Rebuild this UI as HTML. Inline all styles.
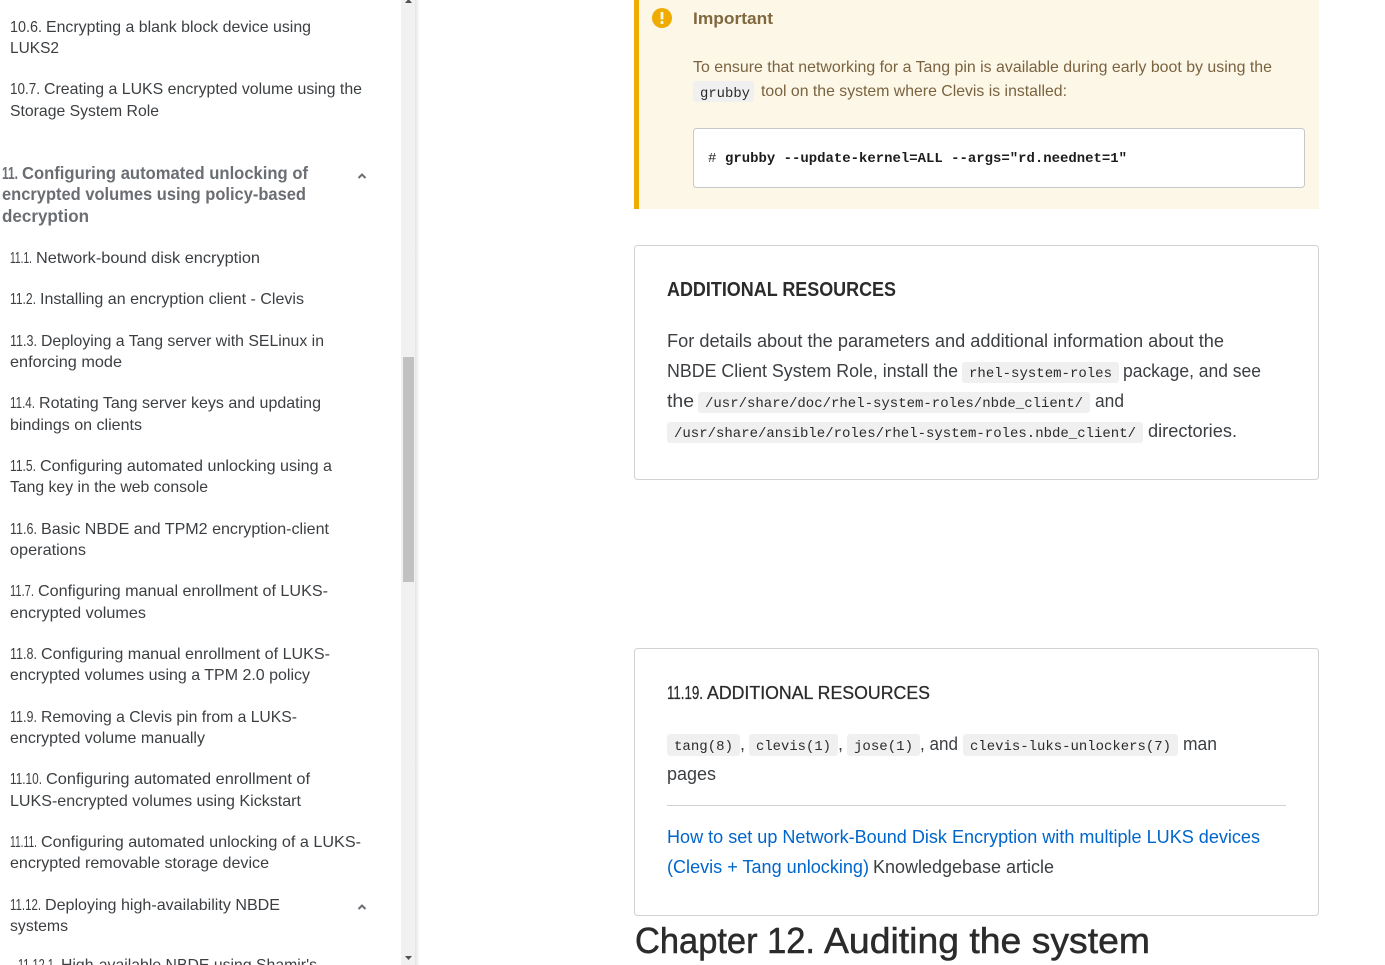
<!DOCTYPE html>
<html lang="en"><head><meta charset="utf-8"><title>Chapter 12. Auditing the system</title>
<style>
html,body{margin:0;padding:0;background:#fff;width:1385px;height:965px;overflow:hidden}
svg{position:absolute;left:0;top:0;display:block}
text{font-family:"Liberation Sans",sans-serif;white-space:pre}
.s{font-size:16px;fill:#3c3f42}
.h{font-size:17.5px;font-weight:bold;fill:#6a6e73}
.p{font-size:18px;fill:#3c3f42}
.c{font-family:"Liberation Mono",monospace;font-size:14px;fill:#2b2b2b}
.w{font-size:16px;fill:#7a6340}
.b{fill:#f0f0f0}
.l{font-size:18px;fill:#0066cc}
</style></head><body>
<svg width="1385" height="965" viewBox="0 0 1385 965" xmlns="http://www.w3.org/2000/svg">
<defs><linearGradient id="sh" x1="0" x2="1" y1="0" y2="0"><stop offset="0" stop-color="#e4e4e4"/><stop offset="1" stop-color="#fff"/></linearGradient></defs>

<!-- sidebar -->
<text class="s" x="10" y="32" textLength="32" lengthAdjust="spacingAndGlyphs">10.6.</text>
<text class="s" x="46" y="32" textLength="265" lengthAdjust="spacingAndGlyphs">Encrypting a blank block device using</text>
<text class="s" x="10" y="53" textLength="49" lengthAdjust="spacingAndGlyphs">LUKS2</text>
<text class="s" x="10" y="94" textLength="30" lengthAdjust="spacingAndGlyphs">10.7.</text>
<text class="s" x="44" y="94" textLength="318" lengthAdjust="spacingAndGlyphs">Creating a LUKS encrypted volume using the</text>
<text class="s" x="10" y="116" textLength="149" lengthAdjust="spacingAndGlyphs">Storage System Role</text>
<text class="h" x="2" y="179" textLength="16" lengthAdjust="spacingAndGlyphs">11.</text>
<text class="h" x="22" y="179" textLength="286" lengthAdjust="spacingAndGlyphs">Configuring automated unlocking of</text>
<text class="h" x="2" y="200" textLength="304" lengthAdjust="spacingAndGlyphs">encrypted volumes using policy-based</text>
<text class="h" x="2" y="222" textLength="87" lengthAdjust="spacingAndGlyphs">decryption</text>
<text class="s" x="10" y="263" textLength="22" lengthAdjust="spacingAndGlyphs">11.1.</text>
<text class="s" x="36" y="263" textLength="224" lengthAdjust="spacingAndGlyphs">Network-bound disk encryption</text>
<text class="s" x="10" y="304" textLength="26" lengthAdjust="spacingAndGlyphs">11.2.</text>
<text class="s" x="40" y="304" textLength="264" lengthAdjust="spacingAndGlyphs">Installing an encryption client - Clevis</text>
<text class="s" x="10" y="346" textLength="27" lengthAdjust="spacingAndGlyphs">11.3.</text>
<text class="s" x="41" y="346" textLength="283" lengthAdjust="spacingAndGlyphs">Deploying a Tang server with SELinux in</text>
<text class="s" x="10" y="367" textLength="112" lengthAdjust="spacingAndGlyphs">enforcing mode</text>
<text class="s" x="10" y="408" textLength="25" lengthAdjust="spacingAndGlyphs">11.4.</text>
<text class="s" x="39" y="408" textLength="282" lengthAdjust="spacingAndGlyphs">Rotating Tang server keys and updating</text>
<text class="s" x="10" y="430" textLength="132" lengthAdjust="spacingAndGlyphs">bindings on clients</text>
<text class="s" x="10" y="471" textLength="26" lengthAdjust="spacingAndGlyphs">11.5.</text>
<text class="s" x="40" y="471" textLength="292" lengthAdjust="spacingAndGlyphs">Configuring automated unlocking using a</text>
<text class="s" x="10" y="492" textLength="198" lengthAdjust="spacingAndGlyphs">Tang key in the web console</text>
<text class="s" x="10" y="534" textLength="27" lengthAdjust="spacingAndGlyphs">11.6.</text>
<text class="s" x="41" y="534" textLength="288" lengthAdjust="spacingAndGlyphs">Basic NBDE and TPM2 encryption-client</text>
<text class="s" x="10" y="555" textLength="76" lengthAdjust="spacingAndGlyphs">operations</text>
<text class="s" x="10" y="596" textLength="24" lengthAdjust="spacingAndGlyphs">11.7.</text>
<text class="s" x="38" y="596" textLength="290" lengthAdjust="spacingAndGlyphs">Configuring manual enrollment of LUKS-</text>
<text class="s" x="10" y="618" textLength="136" lengthAdjust="spacingAndGlyphs">encrypted volumes</text>
<text class="s" x="10" y="659" textLength="27" lengthAdjust="spacingAndGlyphs">11.8.</text>
<text class="s" x="41" y="659" textLength="289" lengthAdjust="spacingAndGlyphs">Configuring manual enrollment of LUKS-</text>
<text class="s" x="10" y="680" textLength="300" lengthAdjust="spacingAndGlyphs">encrypted volumes using a TPM 2.0 policy</text>
<text class="s" x="10" y="722" textLength="27" lengthAdjust="spacingAndGlyphs">11.9.</text>
<text class="s" x="41" y="722" textLength="256" lengthAdjust="spacingAndGlyphs">Removing a Clevis pin from a LUKS-</text>
<text class="s" x="10" y="743" textLength="195" lengthAdjust="spacingAndGlyphs">encrypted volume manually</text>
<text class="s" x="10" y="784" textLength="32" lengthAdjust="spacingAndGlyphs">11.10.</text>
<text class="s" x="46" y="784" textLength="264" lengthAdjust="spacingAndGlyphs">Configuring automated enrollment of</text>
<text class="s" x="10" y="806" textLength="291" lengthAdjust="spacingAndGlyphs">LUKS-encrypted volumes using Kickstart</text>
<text class="s" x="10" y="847" textLength="27" lengthAdjust="spacingAndGlyphs">11.11.</text>
<text class="s" x="41" y="847" textLength="320" lengthAdjust="spacingAndGlyphs">Configuring automated unlocking of a LUKS-</text>
<text class="s" x="10" y="868" textLength="259" lengthAdjust="spacingAndGlyphs">encrypted removable storage device</text>
<text class="s" x="10" y="910" textLength="31" lengthAdjust="spacingAndGlyphs">11.12.</text>
<text class="s" x="45" y="910" textLength="235" lengthAdjust="spacingAndGlyphs">Deploying high-availability NBDE</text>
<text class="s" x="10" y="931" textLength="58" lengthAdjust="spacingAndGlyphs">systems</text>
<text class="s" x="18" y="970" textLength="39" lengthAdjust="spacingAndGlyphs">11.12.1.</text>
<text class="s" x="61" y="970" textLength="256" lengthAdjust="spacingAndGlyphs">High-available NBDE using Shamir's</text>
<path d="M358.500 178 L362 174.500 L365.500 178" fill="none" stroke="#6a6e73" stroke-width="2"/>
<path d="M358.500 909 L362 905.500 L365.500 909" fill="none" stroke="#6a6e73" stroke-width="2"/>

<!-- scrollbar -->
<rect x="401" y="0" width="14" height="965" fill="#f1f1f1"/>
<rect x="415" y="0" width="5" height="965" fill="url(#sh)"/>
<rect x="403" y="357" width="11" height="225" fill="#c1c1c1"/>
<path d="M405 3 L412 3 L408.500 -1 Z" fill="#505050"/>
<path d="M405 956 L412 956 L408.500 960 Z" fill="#505050"/>

<!-- callout -->
<rect x="634" y="0" width="685" height="209" fill="#fdf7e7"/>
<rect x="634" y="0" width="5" height="209" fill="#f0ab00"/>
<circle cx="662" cy="18" r="10" fill="#f0ab00"/>
<rect x="660.600" y="12" width="2.800" height="7.500" rx=".5" fill="#fdf7e7"/>
<rect x="660.600" y="21" width="2.800" height="3" rx=".5" fill="#fdf7e7"/>
<text x="693" y="24" font-size="17" font-weight="bold" fill="#80683f" textLength="80" lengthAdjust="spacingAndGlyphs">Important</text>
<text class="w" x="693" y="72" textLength="579" lengthAdjust="spacingAndGlyphs">To ensure that networking for a Tang pin is available during early boot by using the</text>
<rect class="b" x="693" y="81" width="61" height="21" rx="3"/>
<text class="c" x="700" y="97" textLength="50" lengthAdjust="spacingAndGlyphs">grubby</text>
<text class="w" x="761" y="96" textLength="306" lengthAdjust="spacingAndGlyphs">tool on the system where Clevis is installed:</text>
<rect x="693.500" y="128.500" width="611" height="59" rx="3" fill="#fff" stroke="#c8c8c8"/>
<text class="c" x="708" y="162">#</text>
<text class="c" x="725" y="162" font-weight="bold" textLength="402" lengthAdjust="spacingAndGlyphs" style="fill:#1c1c1c">grubby --update-kernel=ALL --args="rd.neednet=1"</text>

<!-- additional resources 1 -->
<rect x="634.500" y="245.500" width="684" height="234" rx="3" fill="#fff" stroke="#d2d2d2"/>
<text x="667" y="296" font-size="20" font-weight="bold" fill="#2b2b2b" textLength="229" lengthAdjust="spacingAndGlyphs">ADDITIONAL RESOURCES</text>
<text class="p" x="667" y="347" textLength="557" lengthAdjust="spacingAndGlyphs">For details about the parameters and additional information about the</text>
<text class="p" x="667" y="377" textLength="291" lengthAdjust="spacingAndGlyphs">NBDE Client System Role, install the</text>
<rect class="b" x="962" y="362" width="157" height="21" rx="3"/>
<text class="c" x="969" y="377" textLength="143" lengthAdjust="spacingAndGlyphs">rhel-system-roles</text>
<text class="p" x="1123" y="377" textLength="138" lengthAdjust="spacingAndGlyphs">package, and see</text>
<text class="p" x="667" y="407" textLength="27" lengthAdjust="spacingAndGlyphs">the</text>
<rect class="b" x="698" y="392" width="392" height="21" rx="3"/>
<text class="c" x="705" y="407" textLength="378" lengthAdjust="spacingAndGlyphs">/usr/share/doc/rhel-system-roles/nbde_client/</text>
<text class="p" x="1095" y="407" textLength="29" lengthAdjust="spacingAndGlyphs">and</text>
<rect class="b" x="667" y="422" width="476" height="21" rx="3"/>
<text class="c" x="674" y="437" textLength="462" lengthAdjust="spacingAndGlyphs">/usr/share/ansible/roles/rhel-system-roles.nbde_client/</text>
<text class="p" x="1148" y="437" textLength="89" lengthAdjust="spacingAndGlyphs">directories.</text>

<!-- additional resources 2 -->
<rect x="634.500" y="648.500" width="684" height="267" rx="3" fill="#fff" stroke="#d2d2d2"/>
<text x="667" y="699" font-size="18" fill="#2b2b2b" stroke="#2b2b2b" stroke-width=".25" textLength="36" lengthAdjust="spacingAndGlyphs">11.19.</text>
<text x="707" y="699" font-size="18" fill="#2b2b2b" stroke="#2b2b2b" stroke-width=".25" textLength="223" lengthAdjust="spacingAndGlyphs">ADDITIONAL RESOURCES</text>
<rect class="b" x="667" y="734" width="73" height="22" rx="3"/>
<text class="c" x="674" y="750" textLength="59" lengthAdjust="spacingAndGlyphs">tang(8)</text>
<text class="p" x="740" y="750">,</text>
<rect class="b" x="749" y="734" width="89" height="22" rx="3"/>
<text class="c" x="756" y="750" textLength="75" lengthAdjust="spacingAndGlyphs">clevis(1)</text>
<text class="p" x="838" y="750">,</text>
<rect class="b" x="847" y="734" width="73" height="22" rx="3"/>
<text class="c" x="854" y="750" textLength="59" lengthAdjust="spacingAndGlyphs">jose(1)</text>
<text class="p" x="920" y="750" textLength="38" lengthAdjust="spacingAndGlyphs">, and</text>
<rect class="b" x="963" y="734" width="215" height="22" rx="3"/>
<text class="c" x="970" y="750" textLength="201" lengthAdjust="spacingAndGlyphs">clevis-luks-unlockers(7)</text>
<text class="p" x="1183" y="750" textLength="34" lengthAdjust="spacingAndGlyphs">man</text>
<text class="p" x="667" y="780" textLength="49" lengthAdjust="spacingAndGlyphs">pages</text>
<rect x="667" y="805" width="619" height="1" fill="#d2d2d2"/>
<text class="l" x="667" y="843" textLength="593" lengthAdjust="spacingAndGlyphs">How to set up Network-Bound Disk Encryption with multiple LUKS devices</text>
<text class="l" x="667" y="873" textLength="202" lengthAdjust="spacingAndGlyphs">(Clevis + Tang unlocking)</text>
<text class="p" x="873" y="873" textLength="181" lengthAdjust="spacingAndGlyphs">Knowledgebase article</text>

<text x="635" y="953" font-size="36" fill="#2b2b2b" stroke="#2b2b2b" stroke-width=".5" textLength="180" lengthAdjust="spacingAndGlyphs">Chapter 12.</text>
<text x="824" y="953" font-size="36" fill="#2b2b2b" stroke="#2b2b2b" stroke-width=".5" textLength="326" lengthAdjust="spacingAndGlyphs">Auditing the system</text>
</svg>
</body></html>
